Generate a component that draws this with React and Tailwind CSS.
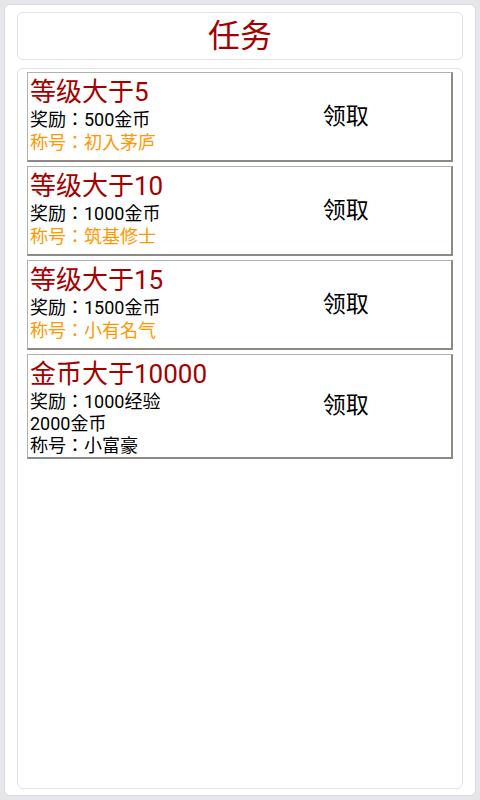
import React from 'react';

const tasks = [
  { title: '等级大于5', reward: ['奖励：500金币'], name: '称号：初入茅庐', orange: true },
  { title: '等级大于10', reward: ['奖励：1000金币'], name: '称号：筑基修士', orange: true },
  { title: '等级大于15', reward: ['奖励：1500金币'], name: '称号：小有名气', orange: true },
  { title: '金币大于10000', reward: ['奖励：1000经验', '2000金币'], name: '称号：小富豪', orange: false },
];

// JP face draws the full-width colon centred, like the reference
const lineFont = { fontFamily: 'Roboto, "Noto Sans CJK JP", sans-serif' };

const TaskCard = ({ task }) => (
  <div className="flex min-h-[90px] bg-white border-t border-l border-[#b4b0aa] border-r-2 border-b-2 border-r-[#8d8983] border-b-[#8d8983]">
    <div className="flex-1 pl-[2px] pt-[3px]">
      <div className="text-[26px] leading-[33px] text-[#a50000]">{task.title}</div>
      {task.reward.map((line) => (
        <div key={line} className="text-[18px] leading-[22px] text-black" style={lineFont}>
          {line}
        </div>
      ))}
      <div
        className={
          task.orange
            ? 'text-[18px] leading-[22px] mt-[1px] text-[#ff9800]'
            : 'text-[18px] leading-[22px] text-black'
        }
        style={lineFont}
      >
        {task.name}
      </div>
    </div>
    <div className="flex-1 flex items-center justify-center">
      <span className="text-[23px] leading-[30px] text-black">领取</span>
    </div>
  </div>
);

export default function App() {
  return (
    <div
      className="h-[800px] w-[480px] bg-[#e6e6ea] p-[4px]"
      style={{ fontFamily: 'Roboto, "Noto Sans CJK SC", sans-serif' }}
    >
      <div className="h-full flex flex-col bg-white border border-[#d9d9dd] rounded-[6px] px-[12px] pt-[7px] pb-[6px] gap-[8px]">
        {/* header */}
        <div className="h-[48px] shrink-0 flex items-center justify-center border border-[#e2e2e4] rounded-[6px]">
          <span className="text-[32px] leading-[40px] text-[#a50000]">任务</span>
        </div>

        {/* task list */}
        <div className="flex-1 flex flex-col gap-[4px] border border-[#e2e2e4] rounded-[6px] px-[9px] pt-[3px]">
          {tasks.map((t) => (
            <TaskCard key={t.title} task={t} />
          ))}
        </div>
      </div>
    </div>
  );
}
